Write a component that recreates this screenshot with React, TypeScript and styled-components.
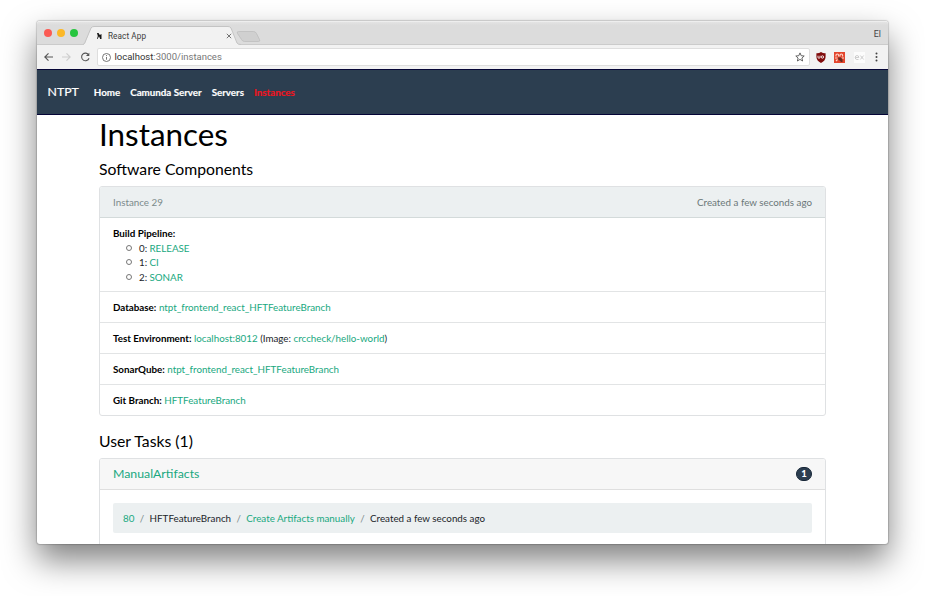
import React from "react";
import styled, { createGlobalStyle } from "styled-components";

const Global = createGlobalStyle`
  * { box-sizing: border-box; }
  html, body { margin: 0; background: #fff; overflow: hidden; }
`;

const Desktop = styled.main`
  width: 925px;
  height: 596px;
  padding: 21px 37px 0 37px;
  overflow: hidden;
`;

const BrowserWindow = styled.div`
  display: flex;
  flex-direction: column;
  width: 851px;
  height: 522.5px;
  border-radius: 3px;
  overflow: hidden;
  background: #fff;
  box-shadow: 0 0 1px 1px rgba(0, 0, 0, 0.16), 0 16px 33px rgba(0, 0, 0, 0.5);
  font-family: Lato, sans-serif;
  font-size: 9.8px;
  line-height: 14.5px;
  color: #212529;
`;

const TabStrip = styled.div`
  display: flex;
  align-items: flex-end;
  flex: 0 0 24px;
  padding: 0 7px 0 7.3px;
  background: linear-gradient(#e4e4e4, #dcdcdc 3px);
  border-top: 1px solid #eee;
  box-shadow: inset 0 -1px #cbcbcb;
  font-family: Roboto, sans-serif;
`;

const Lights = styled.div`
  display: flex;
  gap: 5px;
  height: 16px;
`;

const Light = styled.i<{ $color: string }>`
  width: 8px;
  height: 8px;
  border-radius: 50%;
  background: ${(p) => p.$color};
`;

const TabArea = styled.div`
  display: grid;
  margin-left: 4.7px;
  width: 184px;
  height: 19px;
  > * { grid-area: 1 / 1; }
`;

const TabContent = styled.div`
  display: flex;
  align-items: center;
  width: 149px;
  height: 19px;
  padding-left: 14px;
  font-size: 8.2px;
  color: #3c3c3c;
  span { margin: 0 auto 0 6px; line-height: 12px; letter-spacing: 0.08px; }
`;

const Profile = styled.span`
  margin-left: auto;
  font-size: 8.8px;
  line-height: 12px;
  padding-bottom: 5px;
  color: #444;
`;

const Toolbar = styled.div`
  display: flex;
  align-items: center;
  flex: 0 0 24px;
  padding: 0 8px 0 6px;
  background: #f2f2f2;
  > svg { flex: none; }
`;

const NavIcons = styled.div`
  display: flex;
  gap: 7.3px;
  width: 54px;
`;

const AddressBar = styled.div`
  display: flex;
  align-items: center;
  width: 713px;
  height: 18px;
  padding: 0 4px;
  background: #fff;
  border: 1px solid #dedede;
  border-radius: 2px;
  font: 9.5px/14px Roboto, sans-serif;
  color: #333;
  > span { margin: 0 auto 0 3.5px; }
  em { font-style: normal; color: #777; }
`;

const Extensions = styled.div`
  display: flex;
  align-items: center;
  justify-content: space-between;
  width: 64px;
  margin-left: auto;
`;

const Navbar = styled.nav`
  display: flex;
  align-items: center;
  gap: 10px;
  flex: 0 0 46px;
  padding: 0 11px 0 10.5px;
  background: #2c3e50;
  border-top: 1px solid #050536;
  border-bottom: 1px solid #050536;
`;

const Brand = styled.span`
  position: relative;
  top: 0.5px;
  margin-right: 5px;
  font-size: 12.3px;
  color: #fff;
  -webkit-text-stroke: 0.2px #fff;
`;

const NavLink = styled.a<{ $active?: boolean }>`
  font-weight: 700;
  letter-spacing: -0.02px;
  color: ${(p) => (p.$active ? "#f0141e" : "#fff")};
  -webkit-text-stroke: 0.15px currentColor;
`;

const Container = styled.section`
  width: 727px;
  margin: 0 62px;
`;

const PageTitle = styled.h1`
  margin: 0 0 4px;
  font-size: 31.4px;
  line-height: 38px;
  font-weight: 400;
  color: #000;
`;

const Heading = styled.h2<{ $top?: number }>`
  margin: ${(p) => p.$top ?? 0}px 0 6px;
  font-size: 15.75px;
  line-height: 23px;
  font-weight: 400;
  color: #000;
`;

const Card = styled.div`
  border: 1px solid #dfe1e3;
  border-radius: 3px;
  overflow: hidden;
`;

const CardHeader = styled.div<{ $muted?: boolean }>`
  display: flex;
  align-items: center;
  justify-content: space-between;
  height: 31px;
  padding: 0 13px;
  border-bottom: 1px solid ${(p) => (p.$muted ? "#d3dada" : "#dfdfdf")};
  background: ${(p) => (p.$muted ? "#ecf0f1" : "#f7f7f7")};
  color: #7b8a8b;
`;

const Created = styled.span`
  color: #6b7778;
`;

const Row = styled.div`
  padding: 8px 13px 7.8px;
  height: 30.75px;
  border-bottom: 1px solid #e2e4e5;
  &:last-child { border-bottom: 0; height: 30px; }
`;

const PipelineRow = styled(Row)`
  height: 74.3px;
`;

const Label = styled.b`
  color: #000;
  letter-spacing: -0.01px;
`;

const Link = styled.a<{ $large?: boolean }>`
  color: #18a880;
  font-size: ${(p) => (p.$large ? "12.3px" : "inherit")};
`;

const Pipelines = styled.ul`
  margin: 0;
  padding-left: 26px;
  list-style: none;
`;

const Pipeline = styled.li`
  display: flex;
  align-items: center;
  gap: 2.3px;
  height: 14.5px;
  &::before {
    content: "";
    width: 4px;
    height: 4px;
    margin: 0 4.3px 0 -12.6px;
    border: 1px solid #777;
    border-radius: 50%;
  }
`;

const Badge = styled.span`
  width: 16px;
  height: 14px;
  border-radius: 7px;
  background: #2c3e50;
  border: 1px solid #172637;
  color: #fff;
  font-weight: 900;
  font-size: 9.5px;
  line-height: 12px;
  text-align: center;
`;

const Breadcrumb = styled.div`
  display: flex;
  align-items: center;
  gap: 5.4px;
  height: 30px;
  margin: 13px 13px 40px;
  padding: 0 10px;
  border-radius: 2px;
  background: #ecf0f1;
  i { font-style: normal; color: #7b8a8b; }
`;

const DatabaseName = "ntpt_frontend_react_HFTFeatureBranch";

function Back({ forward }: { forward?: boolean }) {
  return (
    <svg width="11" height="10" viewBox="0 0 11 10" fill="none" stroke={forward ? "#cdcdcd" : "#555"} strokeWidth="1.1">
      <path d={forward ? "M1 5h8M5.5 1.3 9.2 5 5.5 8.7" : "M10 5H2M5.5 1.3 1.8 5l3.7 3.7"} />
    </svg>
  );
}

export default function App() {
  return (
    <Desktop>
      <Global />
      <BrowserWindow>
        <TabStrip>
          <Lights>
            <Light $color="#fb5b54" />
            <Light $color="#fcb827" />
            <Light $color="#27c53f" />
          </Lights>
          <TabArea>
            <svg width="184" height="19" viewBox="0 0 184 19" fill="none">
              <path d="M0 19L2 17.5 8 2Q9 .5 11 .5H145Q147 .5 148 2L154 17Q155 19 158 19Z" fill="#f2f2f2" />
              <path d="M0 18.5 L1.5 17.5 8 2Q9 .5 11 .5H145Q147 .5 148 2L154 17Q155 18.5 158 18.5" stroke="#c4c4c4" />
              <path d="M155.5 5.5h15q2 0 3 2l3 6q1 2-1 2h-14q-2 0-3-2l-4-6q-1-2 1-2z" fill="#d0d0d0" stroke="#bebebe" strokeWidth=".8" />
            </svg>
            <TabContent>
              <svg width="5" height="6" viewBox="0 0 5 6" fill="#161616">
                <path d="M0 0h1.5l1.3 2L4.5 1v5H3.2L2 3.3.6 6H0l.8-3z" />
              </svg>
              <span>React App</span>
              <svg width="6" height="6" viewBox="0 0 6 6" stroke="#666" strokeWidth=".9"><path d="m.8.8 4.4 4.4m0-4.4L.8 5.2" /></svg>
            </TabContent>
          </TabArea>
          <Profile>El</Profile>
        </TabStrip>
        <Toolbar>
          <NavIcons>
            <Back />
            <Back forward />
            <svg width="11" height="10" viewBox="0 0 11 10" fill="none" stroke="#555" strokeWidth="1.1">
              <path d="M8.7 3A3.8 3.8 0 1 0 9 6.2" /><path d="M9.3.7v3.4H5.9z" fill="#555" stroke="none" />
            </svg>
          </NavIcons>
          <AddressBar>
            <svg width="9" height="9" viewBox="0 0 9 9" fill="none" stroke="#666" strokeWidth=".9">
              <circle cx="4.5" cy="4.5" r="4" /><path d="M4.5 4v2.7M4.5 2.1v1" />
            </svg>
            <span>localhost<em>:3000/instances</em></span>
            <svg width="10" height="10" viewBox="0 0 10 10" fill="none" stroke="#555" strokeWidth=".9">
              <path d="m5 .9 1.2 2.8 3 .3-2.3 2 .7 3L5 7.4 2.4 9l.7-3L.8 4l3-.3z" />
            </svg>
          </AddressBar>
          <Extensions>
            <svg width="10" height="11" viewBox="0 0 10 11">
              <path d="M5 0Q7 1.5 9.6 1.3V5Q9.4 8.8 5 11 .6 8.8.4 5V1.3Q3 1.5 5 0z" fill="#800c0c" />
              <path d="M2 3.7v1.6q0 1 1 1t1-1V3.7M5.2 5a1.2 1.2 0 1 0 2.4 0 1.2 1.2 0 1 0-2.4 0" fill="none" stroke="#fff" strokeWidth=".9" />
            </svg>
            <svg width="11" height="11" viewBox="0 0 11 11">
              <path d="M0 0h11v11H0z" fill="#e3452d" />
              <path d="M2 4.5V3q0-1 1.3-1t1.3 1v1.5M6 4.5V3q0-1 1.3-1t1.3 1v1.5M1 6h2.5M7.5 6H10M2 9l1.5-1.5" fill="none" stroke="#ffd5c8" strokeWidth="1.1" />
              <path d="M4 5.5h3l1.5 2V10H7L5.8 8.5 4.5 8z" fill="#692b20" />
            </svg>
            <svg width="11" height="11" viewBox="0 0 11 11">
              <path d="M0 0h11v11H0z" fill="#fcfcfc" />
              <path d="M1.3 5.5h3.5Q4.8 3.5 3 3.5t-1.8 2 1.8 2h1.5M6.3 3.5l3.4 4m0-4-3.4 4" fill="none" stroke="#c2c2c2" strokeWidth=".8" />
            </svg>
            <svg width="7" height="10" viewBox="0 0 7 10" fill="#444">
              <circle cx="3.5" cy="1.5" r="1" /><circle cx="3.5" cy="5" r="1" /><circle cx="3.5" cy="8.5" r="1" />
            </svg>
          </Extensions>
        </Toolbar>
        <Navbar>
          <Brand>NTPT</Brand>
          <NavLink>Home</NavLink>
          <NavLink>Camunda Server</NavLink>
          <NavLink>Servers</NavLink>
          <NavLink $active>Instances</NavLink>
        </Navbar>
        <Container>
          <PageTitle>Instances</PageTitle>
          <Heading>Software Components</Heading>
          <Card>
            <CardHeader $muted>
              <span>Instance 29</span>
              <Created>Created a few seconds ago</Created>
            </CardHeader>
            <PipelineRow>
              <Label>Build Pipeline:</Label>
              <Pipelines>
                {["RELEASE", "CI", "SONAR"].map((name, i) => (
                  <Pipeline key={name}><span>{i}:</span><Link>{name}</Link></Pipeline>
                ))}
              </Pipelines>
            </PipelineRow>
            <Row><Label>Database:</Label> <Link>{DatabaseName}</Link></Row>
            <Row><Label>Test Environment:</Label> <Link>localhost:8012</Link> (Image: <Link>crccheck/hello-world</Link>)</Row>
            <Row><Label>SonarQube:</Label> <Link>{DatabaseName}</Link></Row>
            <Row><Label>Git Branch:</Label> <Link>HFTFeatureBranch</Link></Row>
          </Card>
          <Heading $top={13.4}>User Tasks (1)</Heading>
          <Card>
            <CardHeader>
              <Link $large>ManualArtifacts</Link>
              <Badge>1</Badge>
            </CardHeader>
            <Breadcrumb>
              <Link>80</Link><i>/</i>
              <span>HFTFeatureBranch</span><i>/</i>
              <Link>Create Artifacts manually</Link><i>/</i>
              <span>Created a few seconds ago</span>
            </Breadcrumb>
          </Card>
        </Container>
      </BrowserWindow>
    </Desktop>
  );
}
